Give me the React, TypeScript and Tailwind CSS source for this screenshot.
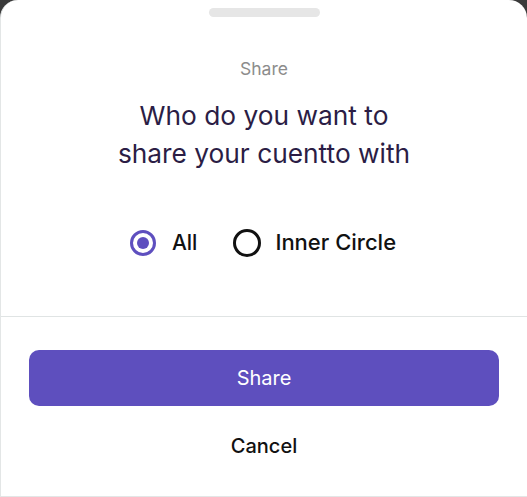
export default function App() {
  return (
    <div className="h-[497px] w-[527px] bg-[#3a3a3a] font-['Inter',sans-serif]">
      <div className="flex h-full flex-col rounded-t-[18px] border-b border-l border-[#e3e6e6] bg-white">
        {/* drag handle */}
        <div className="flex justify-center pt-[8px]">
          <div className="h-[9px] w-[111px] rounded-full bg-[#e6e6e6]" />
        </div>

        <p className="mt-[42px] text-center text-[17.5px] leading-[20px] text-[#8c8c8c]">Share</p>

        <h2 className="mt-[18px] text-center text-[26.3px] leading-[38px] text-[#2b1d45]">
          Who do you want to
          <br />
          share your cuentto with
        </h2>

        {/* options */}
        <div className="mt-[53px] flex items-center justify-center gap-[36px] pr-[2px]">
          <label className="flex items-center gap-[16px]">
            <span className="flex h-[26px] w-[26px] items-center justify-center rounded-full border-[3px] border-[#5e4fbf]">
              <span className="h-[12px] w-[12px] rounded-full bg-[#5e4fbf]" />
            </span>
            <span className="text-[21px] font-medium text-[#111]">All</span>
          </label>
          <label className="flex items-center gap-[14px]">
            <span className="h-[28px] w-[28px] rounded-full border-[3px] border-[#111]" />
            <span className="text-[22px] font-medium text-[#111]">Inner Circle</span>
          </label>
        </div>

        <div className="mt-[57px] h-px bg-[#e0e4e4]" />

        <div className="flex flex-col items-center px-[28px] pt-[33px]">
          <button className="h-[56px] w-full rounded-[10px] bg-[#5e4fbe] text-[20px] text-white">Share</button>
          <button className="mt-[25px] text-[20px] font-medium text-[#111]">Cancel</button>
        </div>
      </div>
    </div>
  )
}
